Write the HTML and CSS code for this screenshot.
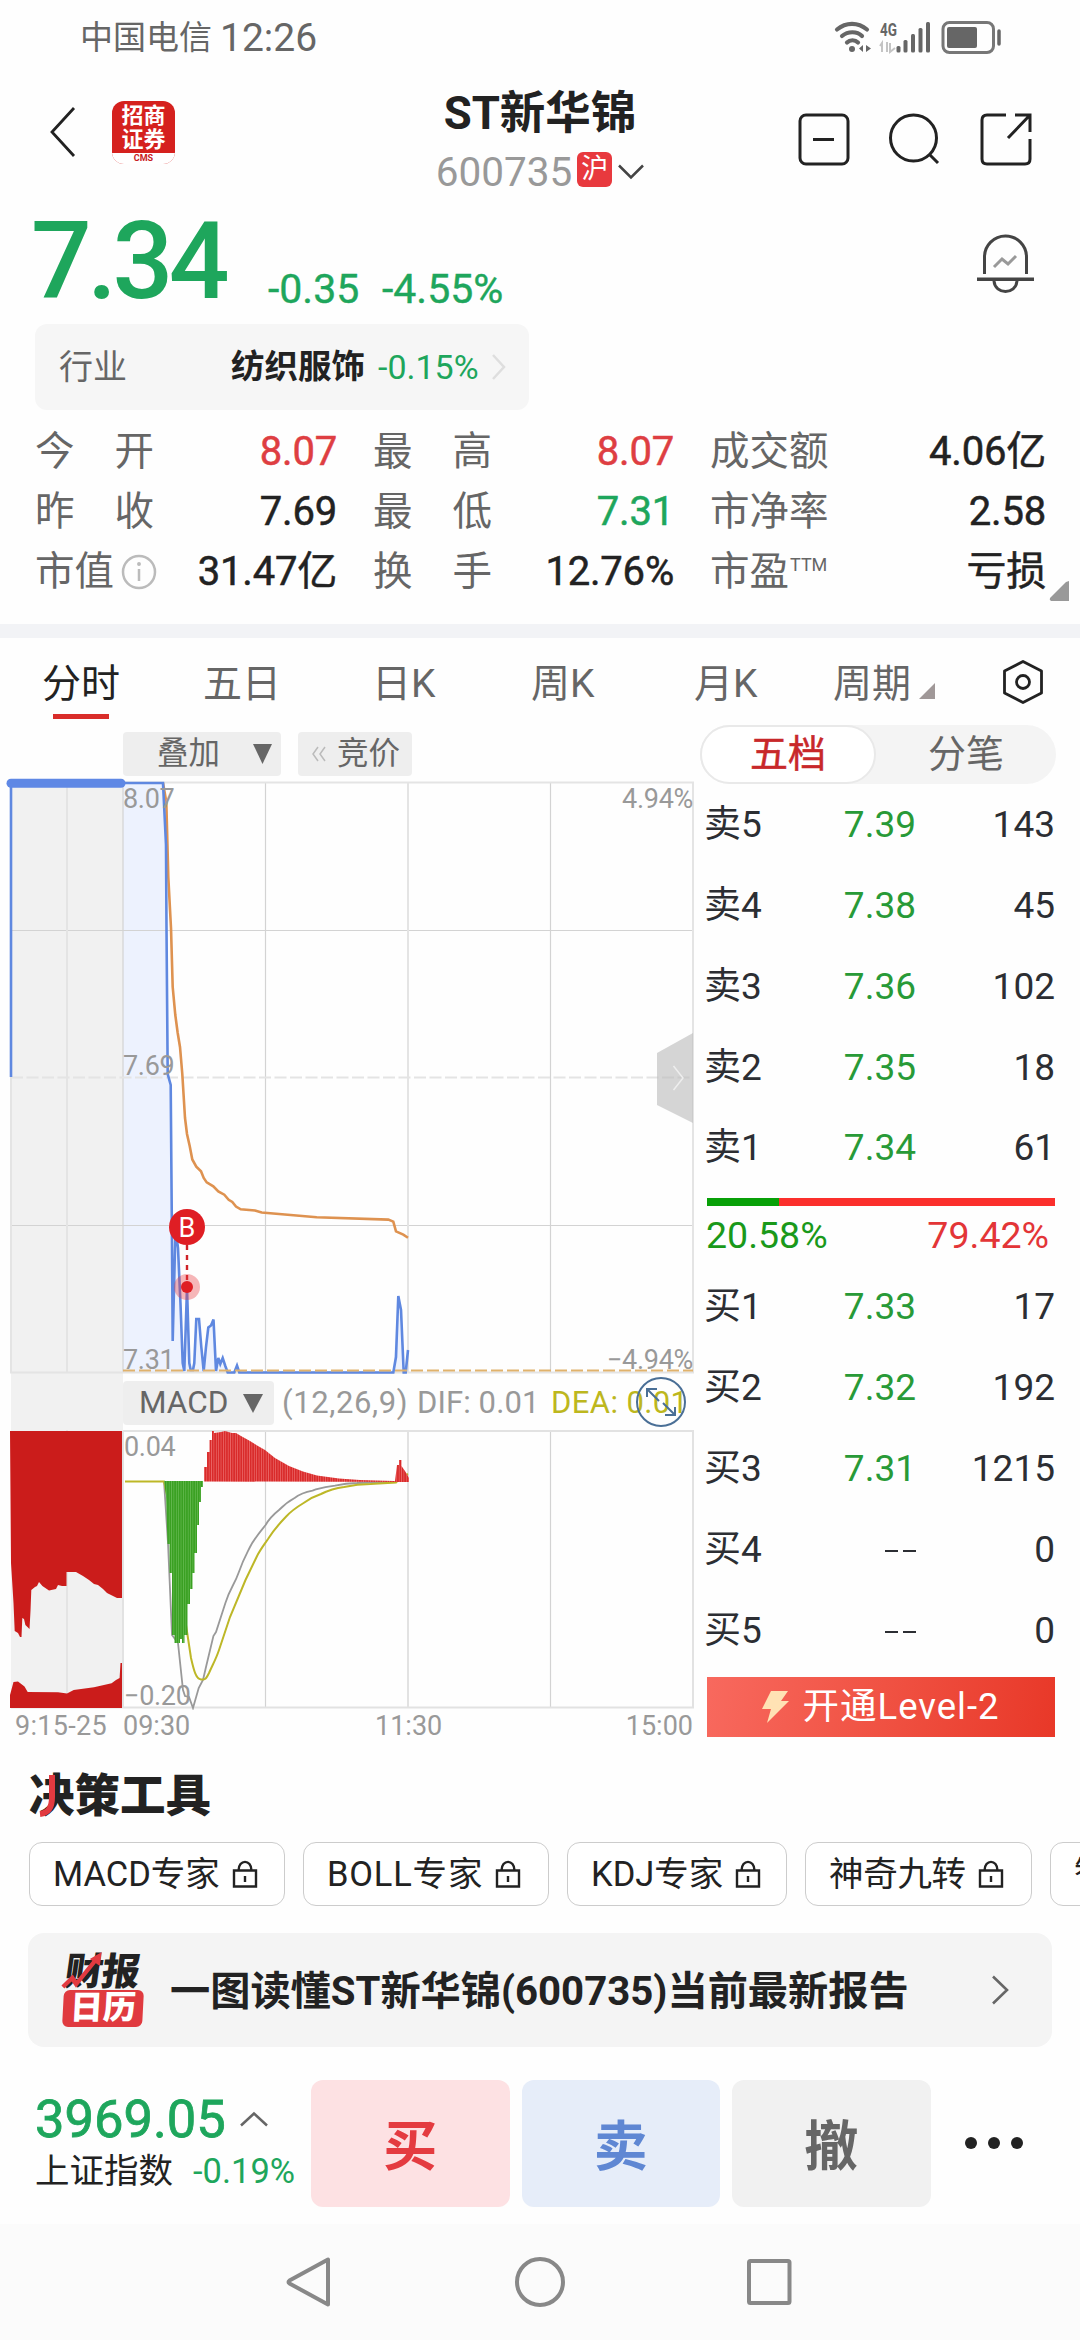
FILE: index.html
```html
<!DOCTYPE html>
<html lang="zh-CN">
<head>
<meta charset="utf-8">
<title>ST新华锦 600735</title>
<link rel="stylesheet" href="styles.css">
</head>
<body>
<div class="screen">

  <div class="status">
    <span class="carrier">中国电信</span><span class="clock">12:26</span>
    <svg class="status-icons" width="170" height="34" viewBox="834 20 170 34" fill="none">
      <g stroke="#666" stroke-width="4.2" stroke-linecap="round">
        <path d="M837 28.500C846 21 858 21 867 28.500"/>
        <path d="M842 35C848 30 857 30 862 35"/>
        <path d="M847 41.500C850 38.500 855 38.500 858 41.500"/>
      </g>
      <circle cx="852" cy="48" r="3" fill="#666"/>
      <path d="M863 44v7l-4-3.500zM866 44v7l5-3.500z" fill="#666"/>
      <text x="880" y="34.500" class="net-label" textLength="17" lengthAdjust="spacingAndGlyphs">4G</text>
      <path d="M882 51V42l-2 3M887 51V41M890 42v9l5-4" stroke="#c4c4c4" stroke-width="2"/>
      <g fill="#666"><rect x="896.500" y="45" width="4" height="6.500" rx="1.500"/><rect x="903.500" y="39" width="4" height="12.500" rx="1.500"/><rect x="911" y="33" width="4" height="18.500" rx="1.500"/><rect x="918.500" y="27" width="4" height="24.500" rx="1.500"/><rect x="926" y="21" width="4" height="30.500" rx="1.500"/></g>
      <rect x="943" y="21.500" width="50.500" height="30" rx="6.500" stroke="#777" stroke-width="3"/>
      <rect x="947" y="26" width="30" height="21" rx="2" fill="#666"/>
      <path d="M999 30v13" stroke="#666" stroke-width="3.500" stroke-linecap="round"/>
    </svg>
  </div>

  <header class="header">
    <svg class="back" width="28" height="52" viewBox="0 0 28 52" fill="none" stroke="#222" stroke-width="2.800"><path d="M25 2L3 26l22 24"/></svg>
    <div class="broker"><div class="broker-name">招商<br>证券</div><div class="broker-en">CMS</div></div>
    <div class="title">
      <div class="name">ST新华锦</div>
      <div class="code">600735<span class="market">沪</span><svg width="26" height="16" viewBox="0 0 26 16" fill="none" stroke="#444" stroke-width="2.500"><path d="M1 1.500l12 12 12-12"/></svg></div>
    </div>
    <svg class="actions" width="236" height="56" viewBox="798 112 236 56" fill="none" stroke="#222" stroke-width="3">
      <rect x="800" y="115" width="48" height="49" rx="6"/><path d="M813 139.500h21"/>
      <circle cx="913.500" cy="138" r="23"/><path d="M929 154l9 9"/>
      <path d="M1006 115h-19q-5 0-5 5v39q0 5 5 5h38q5 0 5-5v-20M1015 115h15v17M1030 115l-22 23"/>
    </svg>
  </header>

  <section class="quote">
    <div class="price">7.34</div>
    <div class="change">-0.35</div>
    <div class="change pct">-4.55%</div>
    <svg class="bell" width="60" height="62" viewBox="976 233 60 62" fill="none" stroke="#444" stroke-width="3"><path d="M984.500 274V257a21 21 0 0 1 42 0v17"/><path d="M977 279.200h57" stroke-width="3.600"/><path d="M994 281c1 14 22 14 23 0"/><path d="M994 267l8-8 6 5 8-8" stroke="#999"/></svg>
  </section>

  <div class="industry">
    <span class="ind-label">行业</span><span class="ind-name">纺织服饰</span><span class="ind-pct">-0.15%</span>
    <svg width="16" height="26" viewBox="0 0 16 26" fill="none" stroke="#dedede" stroke-width="2.500"><path d="M2 1l11 12L2 25"/></svg>
  </div>

  <section class="stats">
    <div class="cell"><span class="lab"><i>今</i><i>开</i></span><b class="up">8.07</b></div>
    <div class="cell"><span class="lab"><i>最</i><i>高</i></span><b class="up">8.07</b></div>
    <div class="cell"><span class="lab">成交额</span><b>4.06亿</b></div>
    <div class="cell"><span class="lab"><i>昨</i><i>收</i></span><b>7.69</b></div>
    <div class="cell"><span class="lab"><i>最</i><i>低</i></span><b class="down">7.31</b></div>
    <div class="cell"><span class="lab">市净率</span><b>2.58</b></div>
    <div class="cell"><span class="lab wide">市值<svg width="36" height="36" viewBox="0 0 36 36" fill="none" stroke="#bbb" stroke-width="2.500"><circle cx="18" cy="18" r="16"/><path d="M18 15v12"/><circle cx="18" cy="10" r="1.200" fill="#bbb" stroke-width="1.500"/></svg></span><b>31.47亿</b></div>
    <div class="cell"><span class="lab"><i>换</i><i>手</i></span><b>12.76%</b></div>
    <div class="cell"><span class="lab wide">市盈<small>TTM</small></span><b>亏损</b></div>
    <svg class="corner" width="20" height="20"><path d="M20 0v20H2q-2-1-1-3L17 1z" fill="#999"/></svg>
  </section>

  <div class="strip"></div>

  <nav class="tabs">
    <span class="tab active">分时</span><span class="tab">五日</span><span class="tab">日K</span><span class="tab">周K</span><span class="tab">月K</span>
    <span class="tab period">周期<svg width="16" height="16"><path d="M16 0v16H0z" fill="#a09898"/></svg></span>
    <svg class="gear" width="42" height="46" viewBox="0 0 42 46" fill="none" stroke="#222" stroke-width="2.800"><path d="M21 2.500L39.500 12v22L21 43.500 2.500 34V12z" stroke-linejoin="round"/><circle cx="21" cy="23" r="6.500"/></svg>
  </nav>

  <main class="main">
    <section class="charts">
      <div class="overlay-row">
        <span class="pill overlay">叠加<svg width="19" height="20"><path d="M0 0h19l-9.500 20z" fill="#666"/></svg></span>
        <span class="pill auction"><svg width="14" height="16" viewBox="0 0 14 16" fill="none" stroke="#bbb" stroke-width="1.500"><path d="M6 1L1 8l5 7M13 1L8 8l5 7"/></svg>竞价</span>
      </div>
      <svg class="price-chart" width="700" height="600" viewBox="0 776 700 600" fill="none">
        <rect x="11" y="783" width="112" height="593" fill="#f1f1f1"/>
        <path d="M123 783H163L166 845L166.500 928L167.700 1074L170.700 1085L172 1244L172.700 1341L175.500 1228L178 1248L180.500 1304L184 1371L187 1288L190 1370L194 1363L196.300 1319H199L203.700 1371L208.300 1327L213.500 1319L216 1371L222 1358L228 1372.500H393L398.300 1296L403.700 1372.500L408 1350V1372.500H123z" fill="#edf2fe"/>
        <g stroke="#d3d3d3" stroke-width="1.200"><path d="M11 930.500H693M11 1225.500H693M265.500 783V1372M550.500 783V1372M123 783V1373"/></g>
        <g stroke="#e4e4e4" stroke-width="2"><path d="M123 782.500H693V1372.500H11V783M67 783V1372M408 783V1372"/><path d="M11 1077.500H693" stroke-dasharray="12 3.500"/></g>
        <path d="M163 783L166.300 802L168.300 877L171 928L172.700 987L175.300 1015L177.700 1033L180 1047L182.300 1074L185 1118L187 1134L189.700 1146L192.300 1159.500L196.300 1166.600L201 1171.300L203.700 1178L206.700 1182.400L213.300 1186.400L218.300 1191.500L224.300 1194.700L228.700 1199.800L232.300 1202L236 1206.500L240.700 1209.300L255 1210.500L261.700 1212.500L316.700 1217.200L388.300 1219.600L393.300 1221.600L396 1231.400L403.300 1234.600L408 1237.800" stroke="#de9250" stroke-width="2.600"/>
        <path d="M11 1077V783H163L166 845L166.500 928L167.700 1074L170.700 1085L172 1244L172.700 1341L175.500 1228L178 1248L180.500 1304L182.700 1363L184.300 1371L187 1288L189.300 1363L190.700 1370H193L194.300 1363L196.300 1319H199L201.300 1347L203.700 1371L206 1347L208.300 1327.500L211 1325.500L213.500 1319.500L216 1371L218.300 1358L220.300 1364L222.700 1358L225.300 1366L227.700 1372.500H234.300L237 1365.500L239.300 1372.500H393.300L396 1357L398.300 1296L401 1310L403.700 1372.500H405.700L408 1350" stroke="#5f88e0" stroke-width="2.600"/>
        <path d="M11 783.300H121" stroke="#5f88e5" stroke-width="9" stroke-linecap="round"/>
        <path d="M123 1370.600H693" stroke="#e0b26c" stroke-width="2" stroke-dasharray="12 4"/>
        <g class="axis-text"><text x="123" y="808">8.07</text><text x="123" y="1074.500">7.69</text><text x="123" y="1368.500">7.31</text><text x="693" y="808" text-anchor="end">4.94%</text><text x="693" y="1368.500" text-anchor="end">−4.94%</text></g>
        <path d="M693 1033V1123L657 1105V1053z" fill="#bbb" fill-opacity=".62"/><path d="M673.500 1066l9.500 12-9.500 12" stroke="#eee" stroke-width="1.500"/>
        <path d="M187 1245v36" stroke="#cf2228" stroke-width="2.400" stroke-dasharray="5 5"/>
        <circle cx="187" cy="1287" r="13" fill="#e8383d" fill-opacity=".36"/><circle cx="187" cy="1287" r="6" fill="#df1e24"/>
        <circle cx="187" cy="1227" r="18" fill="#df1e24"/><text x="187" y="1237" class="pin-text" text-anchor="middle">B</text>
      </svg>
      <div class="macd-row">
        <span class="pill macd">MACD<svg width="20" height="19"><path d="M0 0h20l-10 19z" fill="#666"/></svg></span>
        <span class="params">(12,26,9)</span><span class="dif">DIF: 0.01</span><span class="dea">DEA: 0.01</span>
        <svg class="expand" width="52" height="52" viewBox="0 0 52 52" fill="none" stroke="#4a6f96" stroke-width="2"><circle cx="26" cy="26" r="24"/><path d="M12 21v-8h10M13 14l11 11M40 31v8H30M39 38L28 27"/></svg>
      </div>
      <svg class="macd-chart" width="700" height="280" viewBox="0 1430 700 280" fill="none">
        <defs>
          <pattern id="bars-g" x="164" width="2.375" height="10" patternUnits="userSpaceOnUse"><rect width="2.375" height="10" fill="#3aa022"/><rect width=".6" height="10" fill="#6fc05a"/></pattern>
          <pattern id="bars-r" x="204" width="2.375" height="10" patternUnits="userSpaceOnUse"><rect width="2.375" height="10" fill="#d92a2a"/><rect width=".6" height="10" fill="#ef7777"/></pattern>
        </defs>
        <rect x="11" y="1430" width="112" height="278" fill="#f1f1f1"/>
        <path d="M67 1430V1708" stroke="#dfdfdf" stroke-width="1.500"/>
        <path d="M265.500 1431V1708M550.500 1431V1708" stroke="#d3d3d3" stroke-width="1.200"/>
        <path d="M123 1431H693V1707.500H11M123 1431V1708M408 1431V1708" stroke="#e2e2e2" stroke-width="2"/>
        <path d="M10 1431H122V1598H117L113 1596L107 1593L103 1589L98 1585L94 1584L89 1580L83 1576L76 1572H66.500V1586H62L58 1585L56 1589L49 1590.500L42.400 1586L39 1582L37 1586L35 1587L31.300 1590L30.500 1611L29.500 1629L25.400 1625L24 1619L22.300 1618L21.500 1637H20L18 1633L14.700 1631L13.500 1603L11 1563z" fill="#cb1c1b"/>
        <path d="M10 1708V1695L13.500 1682L18 1681.500L24.500 1686.500L27.700 1692L58 1692.300L67 1693.500L73.700 1690L94 1687.300L111.600 1683.300L116 1680L119.600 1678L120.500 1663H122V1708z" fill="#cb1c1b"/>
        <g class="axis-text"><text x="124" y="1455.500">0.04</text><text x="124" y="1705">−0.20</text></g>
        <path d="M164 1481L168 1543L172 1635L178 1643L183 1690L185 1696L189 1697L193 1708L198.700 1688L203 1680L206 1667L213.400 1636L216 1632L225.400 1603C230 1588 234 1586 239 1571.700C243 1560 246 1555 250 1547C254 1539 260 1532 265.600 1525C269 1519 274 1514 279 1510C284 1505 289 1501 294.600 1498C300 1494 306 1492 312.500 1490.700C319 1488 327 1487 335 1485.700C342 1484 350 1483 357 1483L395 1482" stroke="#999" stroke-width="1.800"/>
        <path d="M125 1481.500H164L173 1520L186 1625L191 1658C194 1671 196 1679 201 1679.500C205 1680 206 1679 209 1673C213 1664 216 1659 219 1650L230 1617L245.500 1580L256.700 1556.700C260 1550 264 1545 268 1539C273 1531 279 1524 285.700 1517C291 1511 297 1507 303.600 1503C309 1499 315 1496 321 1494C329 1490 336 1488 344 1487C353 1485 361 1484 370.500 1484L396 1482.500L401 1477L408 1474" stroke="#bdb727" stroke-width="2"/>
        <path d="M164 1481H203V1487H201V1502H199V1525H197V1553H194.500V1573H192.500V1589H190V1604H187.500V1635H184.500V1643H182V1639H180V1643H174.500V1635H172V1573H169.500V1544H167.500L166 1496z" fill="url(#bars-g)"/>
        <path d="M204 1481.500V1467H207V1452H209.500V1440H212V1431H214V1433L221 1432L225 1431L232 1433L236 1433L241 1436L250 1441L258 1446L265 1450L275 1458L289 1466L303 1471.500L317 1475.500L339 1478.500L360 1480L394 1481H395L397 1465H399V1460H401.500V1466L405 1471L409 1478V1482z" fill="url(#bars-r)"/>
      </svg>
      <div class="times"><span>9:15-25</span><span>09:30</span><span>11:30</span><span>15:00</span></div>
    </section>

    <aside class="depth">
      <div class="segment"><span class="on">五档</span><span>分笔</span></div>
      <div class="rows">
        <div class="row"><span>卖5</span><span class="p">7.39</span><span class="v">143</span></div>
        <div class="row"><span>卖4</span><span class="p">7.38</span><span class="v">45</span></div>
        <div class="row"><span>卖3</span><span class="p">7.36</span><span class="v">102</span></div>
        <div class="row"><span>卖2</span><span class="p">7.35</span><span class="v">18</span></div>
        <div class="row"><span>卖1</span><span class="p">7.34</span><span class="v">61</span></div>
      </div>
      <div class="ratio"><div class="ratio-fill" style="width:20.58%"></div></div>
      <div class="ratio-text"><span class="rg">20.58%</span><span class="rr">79.42%</span></div>
      <div class="rows">
        <div class="row"><span>买1</span><span class="p">7.33</span><span class="v">17</span></div>
        <div class="row"><span>买2</span><span class="p">7.32</span><span class="v">192</span></div>
        <div class="row"><span>买3</span><span class="p">7.31</span><span class="v">1215</span></div>
        <div class="row"><span>买4</span><span class="p none"><u></u><u></u></span><span class="v">0</span></div>
        <div class="row"><span>买5</span><span class="p none"><u></u><u></u></span><span class="v">0</span></div>
      </div>
      <div class="level2"><svg width="27" height="32" viewBox="0 0 27 32"><path d="M9 0h17l-7 10h8L5 32l4-14H0z" fill="#ffe2b4"/></svg><span>开通Level-2</span></div>
    </aside>
  </main>

  <section class="tools">
    <div class="tools-title">决策工具<svg class="tools-accent" width="24" height="44" viewBox="0 0 24 44" fill="none" stroke="#e23a40" stroke-width="6"><path d="M14 0V22C14 32 11 38 2 39"/></svg></div>
    <div class="chips">
      <span class="chip c1">MACD专家<svg class="lock" width="26" height="29" viewBox="0 0 26 29"><path d="M2 10.500h22v16H2zM6.500 10.500C6.500-1 19.500-1 19.500 10.500M13 16v6"/></svg></span>
      <span class="chip c2">BOLL专家<svg class="lock" width="26" height="29" viewBox="0 0 26 29"><path d="M2 10.500h22v16H2zM6.500 10.500C6.500-1 19.500-1 19.500 10.500M13 16v6"/></svg></span>
      <span class="chip c3">KDJ专家<svg class="lock" width="26" height="29" viewBox="0 0 26 29"><path d="M2 10.500h22v16H2zM6.500 10.500C6.500-1 19.500-1 19.500 10.500M13 16v6"/></svg></span>
      <span class="chip c4">神奇九转<svg class="lock" width="26" height="29" viewBox="0 0 26 29"><path d="M2 10.500h22v16H2zM6.500 10.500C6.500-1 19.500-1 19.500 10.500M13 16v6"/></svg></span>
      <span class="chip c5">智</span>
    </div>
  </section>

  <section class="report">
    <div class="cal"><div class="cal-top">财报<svg class="cal-arrow" width="44" height="40" viewBox="0 0 44 40" fill="none" stroke="#e23a40" stroke-width="4.500"><path d="M2 36l8-9 5 6L31 9"/><path d="M25 8L36 1v14z" fill="#e23a40" stroke="none"/></svg></div><div class="cal-bottom">日历</div></div>
    <div class="report-title">一图读懂ST新华锦(600735)当前最新报告</div>
    <svg class="go" width="18" height="30" viewBox="0 0 18 30" fill="none" stroke="#666" stroke-width="2.600"><path d="M2 1.500l14 13.500L2 28.500"/></svg>
  </section>

  <footer class="trade">
    <div class="index">
      <div class="index-value">3969.05<svg width="28" height="16" viewBox="0 0 28 16" fill="none" stroke="#666" stroke-width="2.500"><path d="M1 14.500l13-12 13 12"/></svg></div>
      <div class="index-name">上证指数<span>-0.19%</span></div>
    </div>
    <div class="btn buy">买</div><div class="btn sell">卖</div><div class="btn cancel">撤</div>
    <svg class="more" width="60" height="14" fill="#222"><circle cx="7" cy="7" r="6"/><circle cx="30" cy="7" r="6"/><circle cx="53" cy="7" r="6"/></svg>
  </footer>

  <div class="sysnav">
    <svg width="520" height="56" viewBox="280 2254 520 56" fill="none" stroke="#888" stroke-width="4"><path d="M328 2259.500v45L289.500 2283.500q-2-1.500 0-3z" stroke-linejoin="round"/><circle cx="540" cy="2282" r="23"/><rect x="749" y="2261" width="40.500" height="42" rx="1.500"/></svg>
  </div>
</div>
</body>
</html>
```
FILE: styles.css
```css
* { box-sizing: border-box; margin: 0; padding: 0; }
body { width: 1080px; background: #fefefe; font-family: Roboto, "Noto Sans CJK SC", sans-serif; color: #222; }
svg { display: block; flex: none; }
i { font-style: normal; }
.screen { width: 1080px; height: 2340px; overflow: hidden; display: flex; flex-direction: column; }
.screen > * { flex: none; }

.status { height: 75px; display: flex; align-items: center; padding: 0 76px 0 80px; color: #666; white-space: nowrap; }
.carrier { font-size: 33px; line-height: 40px; width: 140px; }
.clock { font-size: 39px; line-height: 44px; }
.status-icons { margin-left: auto; overflow: visible; }
.net-label { font: 700 18px Roboto, sans-serif; fill: #666; }

.header { height: 130px; display: flex; padding-left: 49px; }
.back { margin-top: 31px; }
.broker { width: 63px; height: 63px; margin: 26px 0 0 35px; border-radius: 12px; background: #d5211e; color: #fff; overflow: hidden; text-align: center; }
.broker-name { font-size: 22px; line-height: 24px; font-weight: 700; height: 52px; padding-top: 3px; }
.broker-en { background: #fff; color: #c8201d; font-size: 9px; font-weight: 700; line-height: 10px; height: 11px; }
.title { width: 300px; margin-left: 215px; display: flex; flex-direction: column; align-items: center; }
.name { font-size: 45.500px; font-weight: 700; line-height: 60px; margin-top: 9px; white-space: nowrap; }
.code { display: flex; align-items: center; color: #999; font-size: 40.500px; line-height: 50px; margin-top: 3px; }
.market { background: #e8393e; color: #fff; font-size: 27px; line-height: 34px; width: 35px; height: 35px; border-radius: 6px; text-align: center; margin: 0 6px 5px 5px; }
.actions { margin: 37px 0 0 108px; }

.quote { height: 119px; display: flex; align-items: flex-start; padding-left: 31px; color: #1ea65c; }
.price { font-size: 107px; font-weight: 500; line-height: 120px; width: 237px; margin-top: -3px; letter-spacing: -4.500px; }
.change { font-size: 41px; line-height: 50px; margin-top: 59px; font-weight: 400; width: 114px; -webkit-text-stroke: .4px; }
.pct { width: 594px; }
.bell { margin-top: 28px; }

.industry { margin-left: 35px; width: 494px; height: 86px; border-radius: 12px; background: #f6f6f6; display: flex; align-items: center; padding-left: 24px; font-size: 34px; line-height: 44px; white-space: nowrap; }
.ind-label { color: #666; width: 172px; }
.ind-name { font-weight: 700; font-size: 33.500px; width: 147px; }
.ind-pct { color: #1ea65c; width: 113px; }

.stats { height: 214px; padding: 12px 0 0 35px; display: grid; grid-template-columns: 302px 301px 336px; column-gap: 36px; grid-template-rows: repeat(3, 60px); position: relative; }
.cell { display: flex; align-items: center; justify-content: space-between; font-size: 40px; line-height: 60px; white-space: nowrap; }
.cell b { font-weight: 400; -webkit-text-stroke: .5px; letter-spacing: -.2px; }
.lab { width: 119px; color: #666; font-size: 39.500px; display: flex; justify-content: space-between; }
.lab.wide, .cell:nth-child(6) .lab { justify-content: flex-start; align-items: center; }
.lab svg { margin-left: 7px; }
.lab small { font-size: 18px; line-height: 20px; margin-bottom: 14px; margin-left: 1px; }
.cell .up { color: #de3e42; }
.cell .down { color: #1ea65c; }
.corner { position: absolute; left: 1049px; top: 171px; }
.strip { height: 14px; background: #f2f3f6; }

.tabs { height: 87px; position: relative; display: flex; align-items: flex-start; padding: 16px 35px 0 42px; color: #666; font-size: 39px; line-height: 60px; }
.tab { width: 161px; }
.tab:nth-child(2) { width: 169px; }
.tab:nth-child(3) { width: 159px; }
.tab:nth-child(4) { width: 163px; }
.tab:nth-child(5) { width: 139px; }
.tab.active { color: #222; }
.active::after { content: ""; display: block; width: 56px; height: 5px; margin: 0 0 0 11px; background: #d92d2a; }
.tab.period { display: flex; align-items: center; gap: 8px; width: 169px; }
.period svg { margin-top: 14px; }
.gear { margin-top: 5px; }

.main { height: 1025px; display: flex; }
.charts { width: 700px; height: 1025px; }
.overlay-row { height: 51px; padding: 7px 0 0 123px; display: flex; gap: 17px; }
.pill { height: 44px; background: #eee; color: #666; border-radius: 4px; display: flex; align-items: center; font-size: 31.500px; line-height: 44px; white-space: nowrap; }
.overlay { width: 158px; padding-left: 34px; gap: 33px; }
.auction { width: 114px; padding-left: 14px; gap: 11px; }
.axis-text text { font: 27px Roboto, sans-serif; fill: #999; letter-spacing: -.3px; }
.pin-text { font: 27px Roboto, sans-serif; fill: #fff; }
.macd-row { height: 54px; display: flex; align-items: center; position: relative; padding-left: 123px; font-size: 31px; line-height: 46px; color: #999; white-space: pre; background: linear-gradient(#f1f1f1, #f1f1f1) 11px 0 / 112px 54px no-repeat; }
.macd { width: 151px; padding-left: 16px; gap: 15px; font-size: 31.500px; line-height: 46px; }
.params { width: 143px; padding-left: 8px; letter-spacing: .6px; }
.dif { width: 134px; letter-spacing: .1px; }
.dea { color: #bdb71e; letter-spacing: .4px; }
.expand { position: absolute; left: 635px; top: 0; }
.times { display: flex; height: 32px; line-height: 33px; font-size: 27px; color: #999; padding: 0 7px 0 15px; }
.times span:nth-child(1) { width: 108px; letter-spacing: .3px; }
.times span:nth-child(2) { width: 252px; }
.times span:nth-child(4) { margin-left: auto; }

.depth { width: 356px; }
.segment { height: 59px; border-radius: 30px; background: #f4f4f4; display: flex; font-size: 38px; line-height: 59px; color: #666; }
.segment span { flex: 1; text-align: center; }
.segment .on { flex: none; width: 176px; background: #fff; border: 2px solid #e9e9e9; border-radius: 30px; color: #c8282a; line-height: 55px; -webkit-text-stroke: .5px; }
.rows { padding-left: 4px; }
.row { height: 80.850px; line-height: 82px; font-size: 37px; display: flex; color: #2c2e33; }
.row span:first-child { width: 105px; }
.p { width: 107px; text-align: right; color: #289a37; }
.v { flex: 1; text-align: right; padding-right: 1px; }
.none { display: flex; justify-content: flex-end; align-items: center; gap: 5px; }
.none u { width: 13px; height: 2.600px; background: #2c2e33; margin-top: 4px; }
.ratio { margin: 10px 1px 0 7px; height: 8px; background: #fb2f2c; }
.ratio-fill { height: 8px; background: #08a008; }
.ratio-text { height: 60px; line-height: 58px; display: flex; justify-content: space-between; padding: 0 7px 0 6px; font-size: 37.500px; }
.rg { color: #1a991a; }
.rr { color: #e33537; }
.level2 { margin: 7px 1px 0 7px; height: 60px; background: linear-gradient(100deg, #f8695e, #f05243 50%, #e83828); color: #fff; font-size: 36.500px; line-height: 64px; display: flex; align-items: center; justify-content: center; gap: 13px; letter-spacing: 1px; }

.tools { height: 183px; padding: 16px 0 0 29px; }
.tools-title { font-size: 45.500px; font-weight: 900; line-height: 61px; height: 60px; position: relative; }
.tools-accent { position: absolute; left: 9px; top: 9px; }
.chips { display: flex; margin-top: 16px; gap: 18px; }
.chip { flex: none; height: 64px; border: 1.500px solid #ccc; border-radius: 13px; font-size: 34.500px; line-height: 62px; display: flex; align-items: center; padding-left: 23px; gap: 12px; white-space: nowrap; background: #fff; }
.c1 { width: 256px; }
.c2 { width: 246px; letter-spacing: .8px; }
.c3 { width: 220px; }
.c4 { width: 227px; letter-spacing: -.3px; }
.c5 { width: 200px; }
.lock { fill: none; stroke: #222; stroke-width: 2.400; }

.report { margin-left: 28px; width: 1024px; height: 114px; border-radius: 16px; background: #f4f4f4; display: flex; align-items: center; }
.cal { width: 80px; margin-left: 35px; }
.cal-top { position: relative; font-size: 38px; font-weight: 900; line-height: 36px; transform: skewX(-8deg); letter-spacing: -1px; padding-left: 2px; }
.cal-arrow { position: absolute; left: 0; top: -3px; }
.cal-bottom { background: #e03a3f; color: #fff; font-weight: 900; font-size: 33px; line-height: 35px; height: 37px; border-radius: 6px; text-align: center; transform: skewX(-3deg); }
.report-title { margin-left: 27px; font-size: 40.200px; font-weight: 700; line-height: 60px; white-space: nowrap; width: 794px; padding-top: 4px; }
.go { margin-left: 27px; }

.trade { height: 177px; display: flex; position: relative; padding: 33px 0 0 35px; gap: 12px; }
.index { width: 264px; }
.index-value { display: flex; align-items: center; gap: 14px; font-size: 52.500px; line-height: 60px; height: 60px; margin-top: 9px; color: #1ea65c; -webkit-text-stroke: .8px; }
.index-name { font-size: 34.500px; line-height: 44px; white-space: nowrap; display: flex; gap: 20px; }
.index-name span { color: #1ea65c; }
.btn { width: 198.500px; height: 127px; border-radius: 12px; font-size: 54px; font-weight: 700; line-height: 136px; text-align: center; }
.buy { background: #fde1e3; color: #e43b40; }
.sell { background: #e6edf9; color: #5f87d3; }
.cancel { background: #f1f1f1; color: #666; }
.more { margin: 56px 0 0 21px; }
.sysnav { height: 116px; background: #fbfbfb; padding: 30px 0 0 280px; }
```
